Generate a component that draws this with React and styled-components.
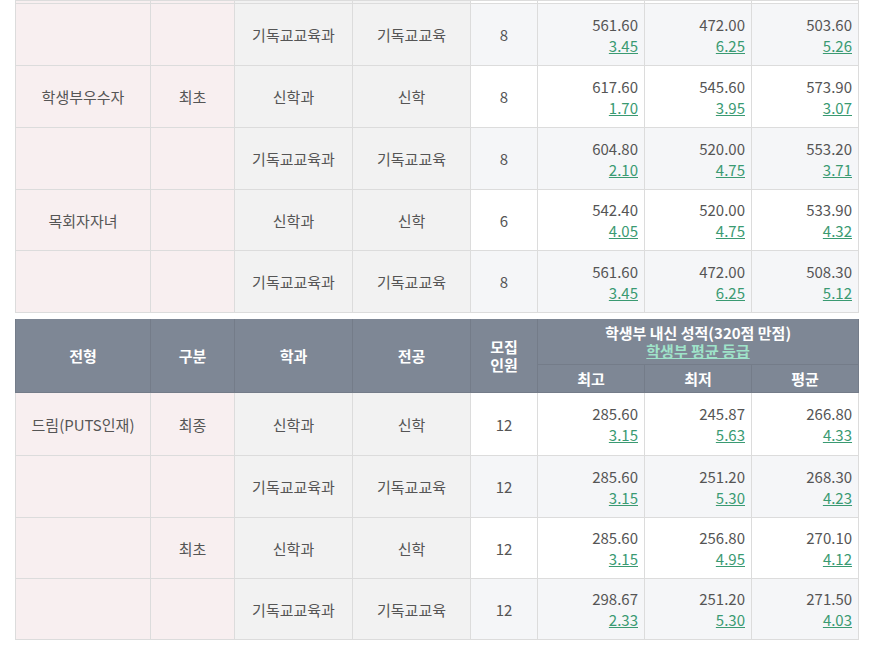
import React from "react";
import styled, { createGlobalStyle } from "styled-components";

const Global = createGlobalStyle`
  html, body { margin: 0; padding: 0; background: #fff; }
  body { font-family: "Noto Sans CJK KR", "Noto Sans", sans-serif; color: #555; }
`;

const Page = styled.div`
  padding: 0 12px 0 15px;
  display: flex;
  flex-direction: column;
  gap: 6px;
`;

const Table = styled.table`
  width: 843px;
  table-layout: fixed;
  border-collapse: collapse;
  font-size: 15px;
  line-height: 21px;
`;

const Th = styled.th`
  background: #7e8795;
  color: #fff;
  font-weight: 700;
  font-size: 15px;
  line-height: 18px;
  border: 1px solid #747c89;
  border-top: none;
  padding: 0;
  height: ${(p) => p.$h || 28}px;
  text-align: center;
  vertical-align: middle;
`;

const HeadLink = styled.a`
  display: block;
  color: #9fe3c9;
  text-decoration: underline;
  font-weight: 700;
`;

const Td = styled.td`
  border: 1px solid #dcdcdc;
  padding: 0 6px;
  height: ${(p) => p.$h ?? 61}px;
  text-align: ${(p) => (p.$num ? "right" : "center")};
  vertical-align: middle;
  background: ${(p) =>
    p.$kind === "pink" ? "#f8eff0" : p.$kind === "gray" ? "#f2f2f2" : p.$alt ? "#f5f6f8" : "#fff"};
  color: #555;
  white-space: nowrap;
`;

const Grade = styled.a`
  display: block;
  color: #3a9a72;
  text-decoration: underline;
`;

const Score = styled.span`
  display: block;
`;

const top = [
  { a: "", b: "", dept: "기독교교육과", major: "기독교교육", n: 8, s: [["561.60", "3.45"], ["472.00", "6.25"], ["503.60", "5.26"]] },
  { a: "학생부우수자", b: "최초", dept: "신학과", major: "신학", n: 8, s: [["617.60", "1.70"], ["545.60", "3.95"], ["573.90", "3.07"]] },
  { a: "", b: "", dept: "기독교교육과", major: "기독교교육", n: 8, s: [["604.80", "2.10"], ["520.00", "4.75"], ["553.20", "3.71"]] },
  { a: "목회자자녀", b: "", dept: "신학과", major: "신학", n: 6, s: [["542.40", "4.05"], ["520.00", "4.75"], ["533.90", "4.32"]] },
  { a: "", b: "", dept: "기독교교육과", major: "기독교교육", n: 8, s: [["561.60", "3.45"], ["472.00", "6.25"], ["508.30", "5.12"]] },
];

const bottom = [
  { a: "드림(PUTS인재)", b: "최종", dept: "신학과", major: "신학", n: 12, s: [["285.60", "3.15"], ["245.87", "5.63"], ["266.80", "4.33"]] },
  { a: "", b: "", dept: "기독교교육과", major: "기독교교육", n: 12, s: [["285.60", "3.15"], ["251.20", "5.30"], ["268.30", "4.23"]] },
  { a: "", b: "최초", dept: "신학과", major: "신학", n: 12, s: [["285.60", "3.15"], ["256.80", "4.95"], ["270.10", "4.12"]] },
  { a: "", b: "", dept: "기독교교육과", major: "기독교교육", n: 12, s: [["298.67", "2.33"], ["251.20", "5.30"], ["271.50", "4.03"]] },
];

const Cols = () => (
  <colgroup>
    <col style={{ width: 135 }} />
    <col style={{ width: 84 }} />
    <col style={{ width: 118 }} />
    <col style={{ width: 118 }} />
    <col style={{ width: 67 }} />
    <col style={{ width: 107 }} />
    <col style={{ width: 107 }} />
    <col style={{ width: 107 }} />
  </colgroup>
);

const Row = ({ r, alt, h }) => (
  <tr>
    <Td $kind="pink" $h={h}>{r.a}</Td>
    <Td $kind="pink" $h={h}>{r.b}</Td>
    <Td $kind="gray" $h={h}>{r.dept}</Td>
    <Td $kind="gray" $h={h}>{r.major}</Td>
    <Td $alt={alt} $h={h}>{r.n}</Td>
    {r.s.map(([v, g], i) => (
      <Td key={i} $num $alt={alt} $h={h}>
        <Score>{v}</Score>
        <Grade href="#">{g}</Grade>
      </Td>
    ))}
  </tr>
);

const topHeights = [61, 61, 61, 60, 61];
const bottomHeights = [62, 61, 60, 60];

export default function App() {
  return (
    <>
      <Global />
      <Page>
        <Table>
          <Cols />
          <tbody>
            <tr>
              <Td $kind="pink" $h={2} />
              <Td $kind="pink" $h={2} />
              <Td $kind="gray" $h={2} />
              <Td $kind="gray" $h={2} />
              <Td $h={2} />
              <Td $h={2} />
              <Td $h={2} />
              <Td $h={2} />
            </tr>
            {top.map((r, i) => (
              <Row key={i} r={r} alt={i % 2 === 0} h={topHeights[i]} />
            ))}
          </tbody>
        </Table>
        <Table>
          <Cols />
          <thead>
            <tr>
              <Th rowSpan={2}>전형</Th>
              <Th rowSpan={2}>구분</Th>
              <Th rowSpan={2}>학과</Th>
              <Th rowSpan={2}>전공</Th>
              <Th rowSpan={2}>모집<br />인원</Th>
              <Th colSpan={3} $h={45}>
                학생부 내신 성적(320점 만점)
                <HeadLink href="#">학생부 평균 등급</HeadLink>
              </Th>
            </tr>
            <tr>
              <Th $h={27}>최고</Th>
              <Th $h={27}>최저</Th>
              <Th $h={27}>평균</Th>
            </tr>
          </thead>
          <tbody>
            {bottom.map((r, i) => (
              <Row key={i} r={r} alt={i % 2 === 1} h={bottomHeights[i]} />
            ))}
          </tbody>
        </Table>
      </Page>
    </>
  );
}
